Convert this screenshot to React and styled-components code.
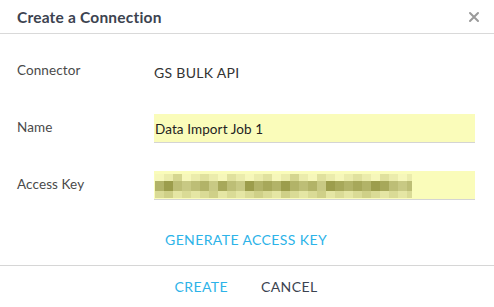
import React from "react";
import styled, { createGlobalStyle } from "styled-components";

const GlobalStyle = createGlobalStyle`
  html, body {
    margin: 0;
    padding: 0;
    background: #ffffff;
  }
  body {
    font-family: "Lato", "Liberation Sans", sans-serif;
  }
`;

const Dialog = styled.div`
  width: 494px;
  height: 307px;
  background: #fff;
  display: flex;
  flex-direction: column;
`;

const Header = styled.div`
  height: 34px;
  display: flex;
  align-items: center;
  justify-content: space-between;
  padding: 0 13px 0 17px;
  border-bottom: 1px solid #d9d9d9;
  box-sizing: border-box;
`;

const Title = styled.h2`
  margin: 0;
  font-size: 15.5px;
  font-weight: 700;
  color: #3c4350;
  letter-spacing: 0.2px;
`;

const Close = styled.button`
  border: 0;
  background: none;
  padding: 0;
  width: 14px;
  height: 14px;
  display: flex;
  cursor: pointer;
`;

const Body = styled.div`
  padding: 23px 19px 0 17px;
  display: flex;
  flex-direction: column;
  gap: 28px;
`;

const Row = styled.div`
  display: grid;
  grid-template-columns: 137px 1fr;
  align-items: center;
  height: 29px;
`;

const Label = styled.label`
  font-size: 13.5px;
  color: #4a4a4a;
  margin-top: -3px;
  letter-spacing: 0.1px;
`;

const Value = styled.div`
  font-size: 14px;
  color: #333;
  padding-top: 1px;
  letter-spacing: 0.3px;
`;

const Field = styled.div`
  height: 29px;
  box-sizing: border-box;
  background: #fafcba;
  border-bottom: 1px solid #d4d4d4;
  display: flex;
  align-items: center;
  padding: 2px 0 0 1px;
  font-size: 13.5px;
  letter-spacing: 0.1px;
  color: #222;
`;

const LinkRow = styled.div`
  display: flex;
  padding-left: 165px;
  margin-top: 24px;
  height: 30px;
  align-items: center;
`;

const TextButton = styled.button`
  border: 0;
  background: none;
  padding: 0;
  font-family: inherit;
  font-size: 14px;
  letter-spacing: 0.4px;
  color: ${p => (p.muted ? "#3c4350" : "#2db3e8")};
  cursor: pointer;
`;

const Footer = styled.div`
  margin-top: auto;
  height: 41px;
  border-top: 1px solid #d6d6d6;
  display: flex;
  justify-content: center;
  align-items: center;
  gap: 33px;
  padding-right: 2px;
`;

const top = [0, 1, 3, 0, 1, 2, 1, 0, 2, 1, 0, 1, 2, 0, 1, 3, 1, 0, 2, 1, 0, 1, 2, 1, 0, 2, 1, 0, 1];
const mid = [4, 6, 3, 2, 3, 4, 2, 5, 3, 2, 6, 4, 5, 4, 6, 4, 3, 4, 2, 6, 5, 4, 5, 4, 6, 5, 3, 2, 3];
const bot = [2, 3, 1, 2, 1, 2, 3, 1, 2, 1, 2, 3, 2, 1, 3, 2, 1, 2, 3, 1, 2, 1, 2, 3, 2, 1, 2, 1, 2];

const shade = (level, base) => {
  const r = base[0] - level * 11;
  const g = base[1] - level * 11;
  const b = base[2] - level * 14;
  return `rgb(${r},${g},${b})`;
};

const BlurredKey = () => {
  const w = 9;
  return (
    <svg width="257" height="24" viewBox="0 0 257 24">
      {top.map((l, i) => (
        <rect key={"t" + i} x={i * w} y={0} width={w} height={7} fill={shade(l, [246, 247, 186])} />
      ))}
      {mid.map((l, i) => (
        <rect key={"m" + i} x={i * w} y={7} width={w} height={10} fill={shade(l, [222, 223, 160])} />
      ))}
      {bot.map((l, i) => (
        <rect key={"b" + i} x={i * w} y={17} width={w} height={7} fill={shade(l, [240, 241, 178])} />
      ))}
    </svg>
  );
};

const CloseIcon = () => (
  <svg width="14" height="14" viewBox="0 0 14 14">
    <path d="M3 3 L11 11 M11 3 L3 11" stroke="#9a9a9a" strokeWidth="2" strokeLinecap="round" />
  </svg>
);

export default function App() {
  return (
    <>
      <GlobalStyle />
      <Dialog>
        <Header>
          <Title>Create a Connection</Title>
          <Close aria-label="close">
            <CloseIcon />
          </Close>
        </Header>
        <Body>
          <Row>
            <Label>Connector</Label>
            <Value>GS BULK API</Value>
          </Row>
          <Row>
            <Label>Name</Label>
            <Field>Data Import Job 1</Field>
          </Row>
          <Row>
            <Label>Access Key</Label>
            <Field>
              <BlurredKey />
            </Field>
          </Row>
        </Body>
        <LinkRow>
          <TextButton>GENERATE ACCESS KEY</TextButton>
        </LinkRow>
        <Footer>
          <TextButton>CREATE</TextButton>
          <TextButton muted>CANCEL</TextButton>
        </Footer>
      </Dialog>
    </>
  );
}
